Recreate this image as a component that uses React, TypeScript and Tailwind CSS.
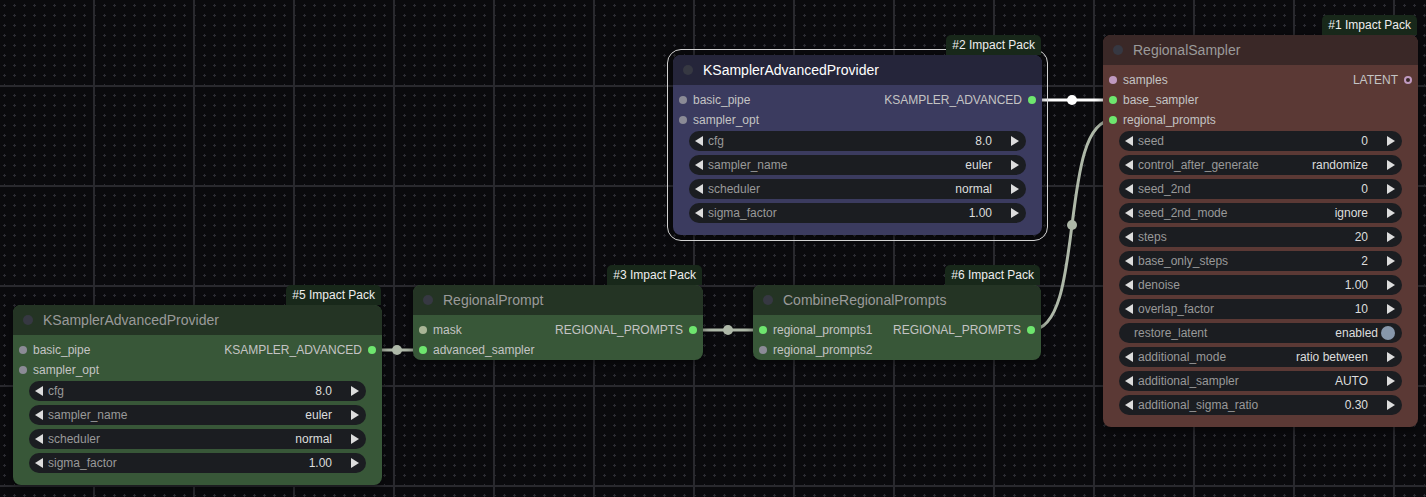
import React from "react";

type Slot = { label: string; dot: string; hollow?: boolean };
type Widget = { label: string; value: string; toggle?: boolean };

type NodeDef = {
  id: number;
  title: string;
  pos: string;
  titleBg: string;
  bodyBg: string;
  inputs: Slot[];
  outputs: Slot[];
  widgets: Widget[];
  selected?: boolean;
};

const GRAY = "bg-[#8b8b96]";
const GREEN = "bg-[#6ee66e]";
const MASK = "bg-[#a9b596]";
const LATENT = "bg-[#c09ac0]";

const samplerWidgets: Widget[] = [
  { label: "cfg", value: "8.0" },
  { label: "sampler_name", value: "euler" },
  { label: "scheduler", value: "normal" },
  { label: "sigma_factor", value: "1.00" },
];

const nodes: NodeDef[] = [
  {
    id: 5,
    title: "KSamplerAdvancedProvider",
    pos: "left-[13px] top-[305px] w-[369px]",
    titleBg: "bg-[#243424]",
    bodyBg: "bg-[#385738]",
    inputs: [
      { label: "basic_pipe", dot: GRAY },
      { label: "sampler_opt", dot: GRAY },
    ],
    outputs: [{ label: "KSAMPLER_ADVANCED", dot: GREEN }],
    widgets: samplerWidgets,
  },
  {
    id: 3,
    title: "RegionalPrompt",
    pos: "left-[413px] top-[285px] w-[290px]",
    titleBg: "bg-[#243424]",
    bodyBg: "bg-[#385738]",
    inputs: [
      { label: "mask", dot: MASK },
      { label: "advanced_sampler", dot: GREEN },
    ],
    outputs: [{ label: "REGIONAL_PROMPTS", dot: GREEN }],
    widgets: [],
  },
  {
    id: 6,
    title: "CombineRegionalPrompts",
    pos: "left-[753px] top-[285px] w-[288px]",
    titleBg: "bg-[#243424]",
    bodyBg: "bg-[#385738]",
    inputs: [
      { label: "regional_prompts1", dot: GREEN },
      { label: "regional_prompts2", dot: GRAY },
    ],
    outputs: [{ label: "REGIONAL_PROMPTS", dot: GREEN }],
    widgets: [],
  },
  {
    id: 2,
    title: "KSamplerAdvancedProvider",
    pos: "left-[673px] top-[55px] w-[369px]",
    titleBg: "bg-[#25253a]",
    bodyBg: "bg-[#3b3b5f]",
    inputs: [
      { label: "basic_pipe", dot: GRAY },
      { label: "sampler_opt", dot: GRAY },
    ],
    outputs: [{ label: "KSAMPLER_ADVANCED", dot: GREEN }],
    widgets: samplerWidgets,
    selected: true,
  },
  {
    id: 1,
    title: "RegionalSampler",
    pos: "left-[1103px] top-[35px] w-[315px]",
    titleBg: "bg-[#3a2827]",
    bodyBg: "bg-[#5b3935]",
    inputs: [
      { label: "samples", dot: LATENT },
      { label: "base_sampler", dot: GREEN },
      { label: "regional_prompts", dot: GREEN },
    ],
    outputs: [{ label: "LATENT", dot: LATENT, hollow: true }],
    widgets: [
      { label: "seed", value: "0" },
      { label: "control_after_generate", value: "randomize" },
      { label: "seed_2nd", value: "0" },
      { label: "seed_2nd_mode", value: "ignore" },
      { label: "steps", value: "20" },
      { label: "base_only_steps", value: "2" },
      { label: "denoise", value: "1.00" },
      { label: "overlap_factor", value: "10" },
      { label: "restore_latent", value: "enabled", toggle: true },
      { label: "additional_mode", value: "ratio between" },
      { label: "additional_sampler", value: "AUTO" },
      { label: "additional_sigma_ratio", value: "0.30" },
    ],
  },
];

function Arrow({ dir }: { dir: "left" | "right" }) {
  return (
    <svg width="8" height="10" viewBox="0 0 8 10" className="shrink-0">
      <polygon
        points={dir === "left" ? "8,0 8,10 0,5" : "0,0 0,10 8,5"}
        fill="#dddddd"
      />
    </svg>
  );
}

function WidgetRow({ w }: { w: Widget }) {
  if (w.toggle) {
    return (
      <div className="flex h-[20px] items-center rounded-full bg-[#1b1d21] pl-[15px] pr-[7px]">
        <span className="text-[#999999]">{w.label}</span>
        <span className="ml-auto text-[#dddddd]">{w.value}</span>
        <span className="ml-[3px] h-[14px] w-[14px] rounded-full bg-[#8797ab]" />
      </div>
    );
  }
  return (
    <div className="flex h-[20px] items-center rounded-full bg-[#1b1d21] pl-[6px] pr-[7px]">
      <Arrow dir="left" />
      <span className="ml-[5px] text-[#999999]">{w.label}</span>
      <span className="ml-auto text-[#dddddd]">{w.value}</span>
      <span className="ml-[19px] flex">
        <Arrow dir="right" />
      </span>
    </div>
  );
}

function Dot({ slot }: { slot: Slot }) {
  if (slot.hollow) {
    return (
      <span className="flex h-[8px] w-[8px] shrink-0 items-center justify-center rounded-full bg-[#c09ac0]">
        <span className="h-[4px] w-[4px] rounded-full bg-[#3a2827]" />
      </span>
    );
  }
  return <span className={`h-[8px] w-[8px] shrink-0 rounded-full ${slot.dot}`} />;
}

function GraphNode({ node }: { node: NodeDef }) {
  const rows = Math.max(node.inputs.length, node.outputs.length);
  return (
    <div className={`absolute ${node.pos} rounded-[8px] ${node.bodyBg} text-[12px] shadow-[0_2px_8px_rgba(0,0,0,0.5)]`}>
      {node.selected && (
        <div className="absolute -inset-[6px] rounded-[14px] border-[1.5px] border-[#d2d2d2]" />
      )}
      <div className="absolute bottom-full right-[1px] h-[20px] rounded-t-[5px] bg-[#18281a] px-[6px] leading-[20px] text-[#eeeeee]">
        #{node.id} Impact Pack
      </div>
      <div className={`relative flex h-[30px] items-center rounded-t-[8px] ${node.titleBg} pl-[10px]`}>
        <span className="h-[10px] w-[10px] rounded-full bg-[#363842]" />
        <span className={`ml-[10px] text-[14px] ${node.selected ? "text-white" : "text-[#9a9a9a]"}`}>
          {node.title}
        </span>
      </div>
      <div className={`relative pt-[5px] ${node.widgets.length ? "pb-[12px]" : ""}`}>
        {Array.from({ length: rows }).map((_, i) => {
          const inp = node.inputs[i];
          const out = node.outputs[i];
          return (
            <div key={i} className="flex h-[20px] items-center px-[6px]">
              {inp && (
                <>
                  <Dot slot={inp} />
                  <span className="ml-[6px] text-[#c4c4c4]">{inp.label}</span>
                </>
              )}
              {out && (
                <>
                  <span className="ml-auto mr-[6px] text-[#c4c4c4]">{out.label}</span>
                  <Dot slot={out} />
                </>
              )}
            </div>
          );
        })}
        {node.widgets.length > 0 && (
          <div className="mt-[1px] flex flex-col gap-[4px] px-[16px]">
            {node.widgets.map((w) => (
              <WidgetRow key={w.label} w={w} />
            ))}
          </div>
        )}
      </div>
    </div>
  );
}

export default function App() {
  return (
    <div className="relative h-[497px] w-[1426px] overflow-hidden bg-[#0a0a0d] font-['Liberation_Sans',Arial,sans-serif]">
      {/* canvas grid */}
      <svg className="absolute inset-0" width="1426" height="497">
        <defs>
          <pattern id="dots" width="10" height="10" patternUnits="userSpaceOnUse">
            <rect x="3" y="5" width="3" height="1" fill="#2c2c33" />
            <rect x="4" y="4" width="1" height="3" fill="#2c2c33" />
          </pattern>
          <pattern id="grid" width="100" height="100" patternUnits="userSpaceOnUse">
            <rect x="93" y="0" width="2" height="100" fill="#29292e" />
            <rect x="0" y="85" width="100" height="2" fill="#29292e" />
          </pattern>
        </defs>
        <rect width="1426" height="497" fill="url(#dots)" />
        <rect width="1426" height="497" fill="url(#grid)" />
      </svg>

      {/* links */}
      <svg className="absolute inset-0" width="1426" height="497">
        <g stroke="#aeb8a8" strokeWidth="3" fill="none">
          <path d="M371 350 L423 350" />
          <path d="M692 330 L763 330" />
          <path d="M1031 330 C1087 330 1057 120 1113 120" />
        </g>
        <g fill="#aeb8a8">
          <circle cx="397" cy="350" r="5" />
          <circle cx="728" cy="330" r="5" />
          <circle cx="1072" cy="225" r="5" />
        </g>
        <path d="M1031 100 L1113 100" stroke="#ffffff" strokeWidth="3" />
        <circle cx="1072" cy="100" r="5" fill="#ffffff" />
      </svg>

      {nodes.map((n) => (
        <GraphNode key={n.id} node={n} />
      ))}
    </div>
  );
}
